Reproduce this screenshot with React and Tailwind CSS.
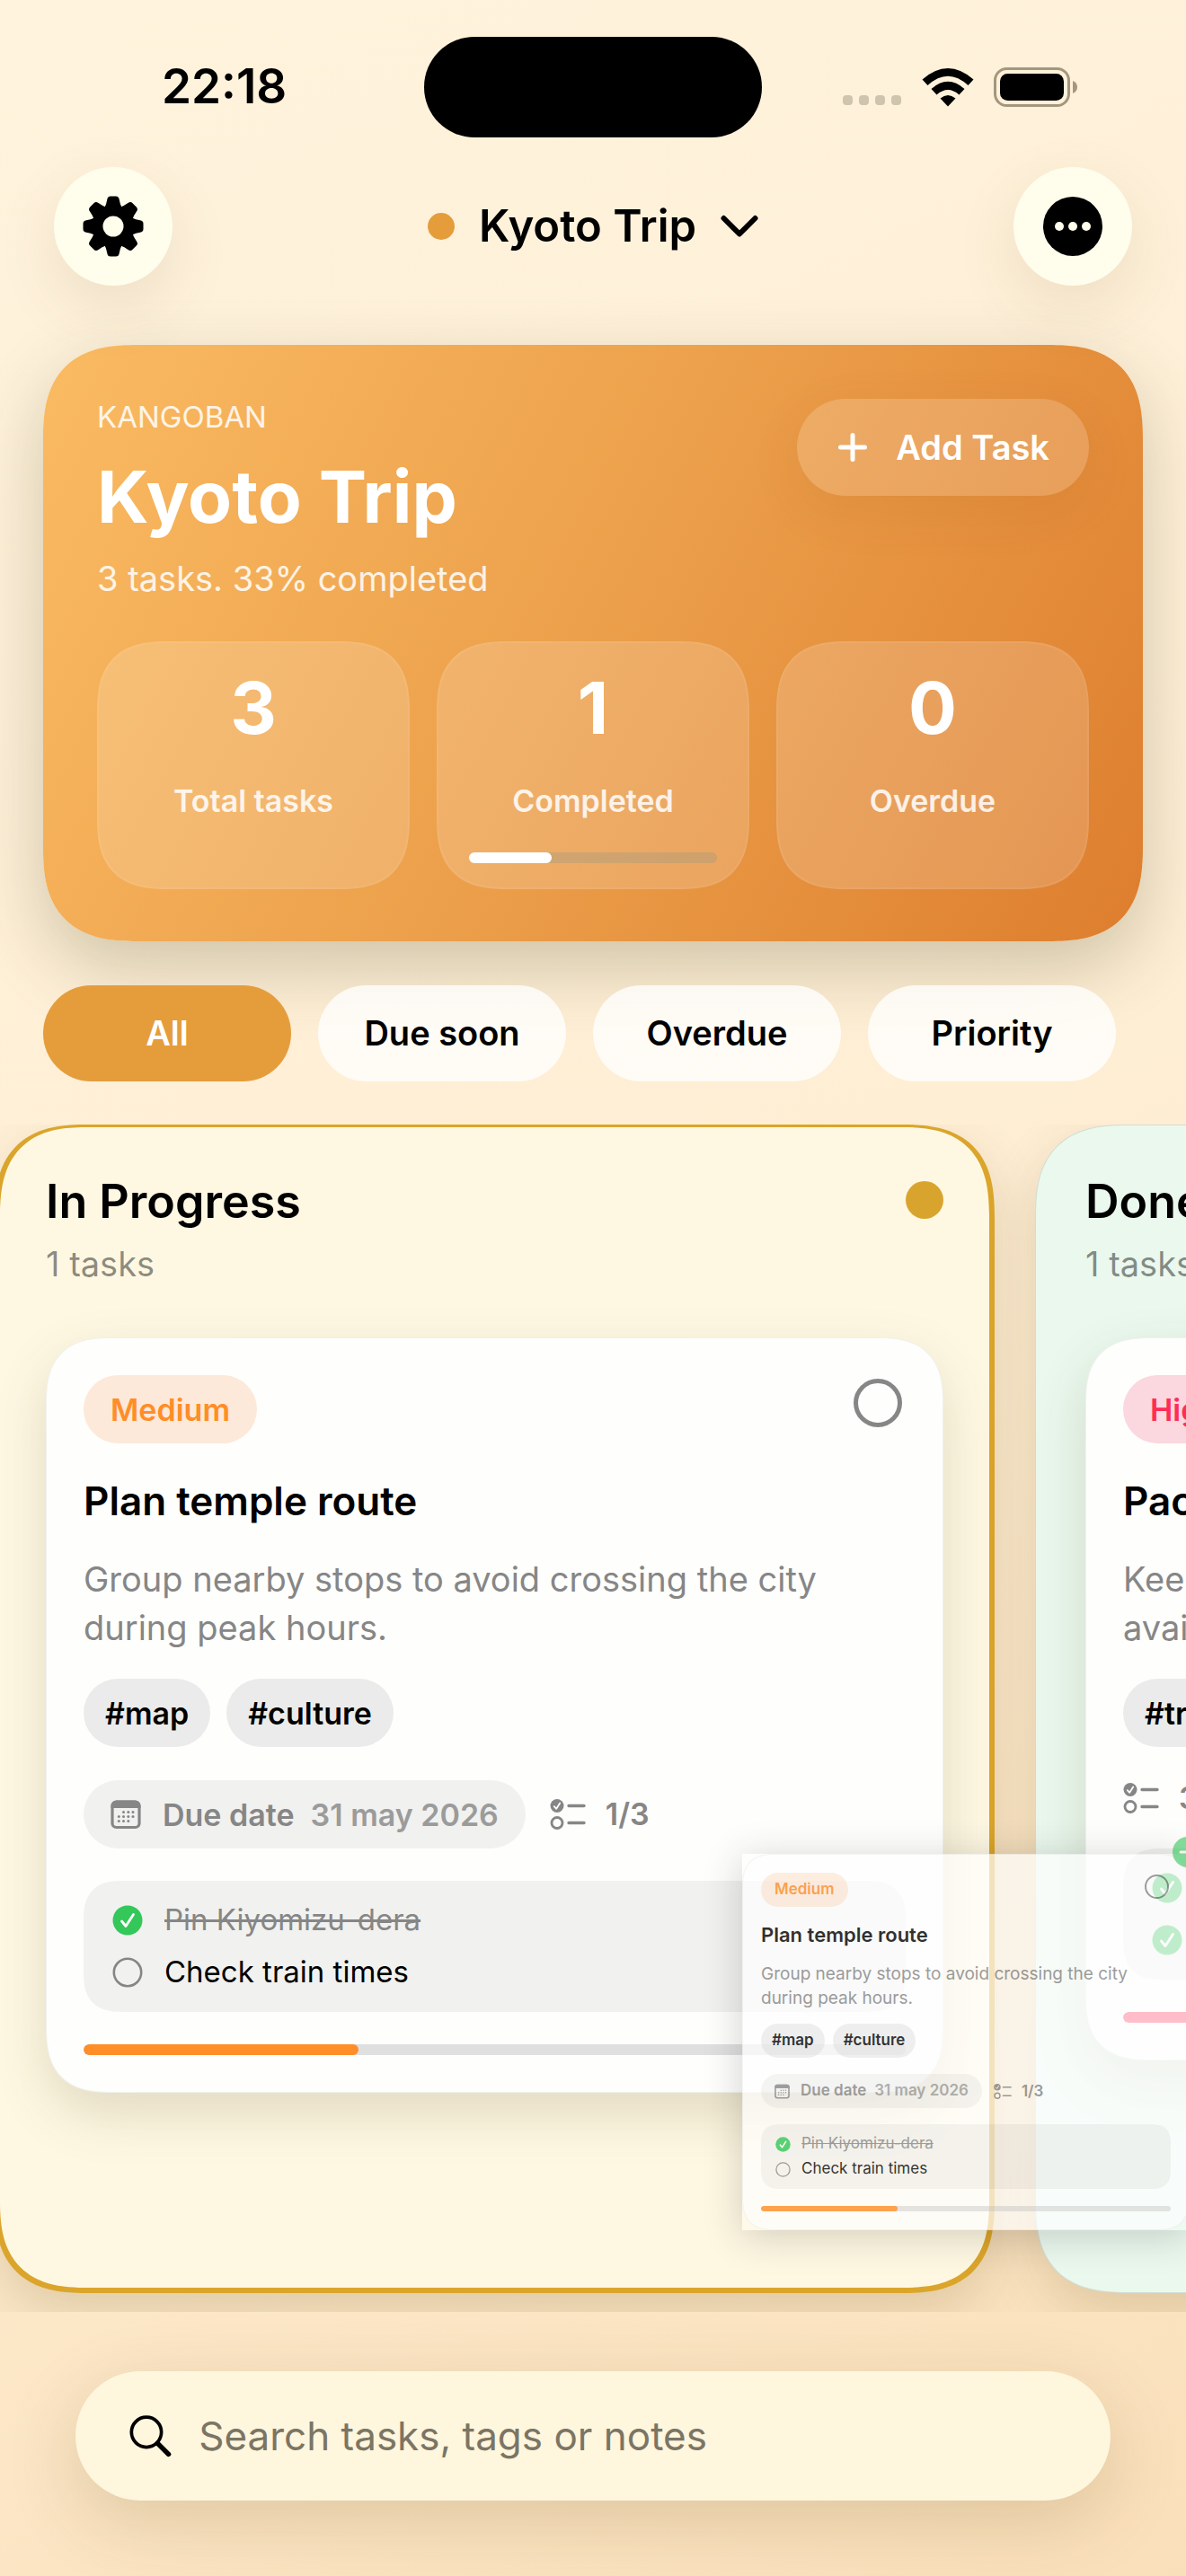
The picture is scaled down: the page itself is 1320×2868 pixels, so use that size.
import { useState } from "react";

const tasks = {
  temple: {
    id: "temple",
    priority: "Medium",
    title: "Plan temple route",
    description: "Group nearby stops to avoid crossing the city during peak hours.",
    tags: ["#map", "#culture"],
    due: "31 may 2026",
    count: "1/3",
    items: [
      { label: "Pin Kiyomizu-dera", done: true },
      { label: "Check train times", done: false },
    ],
    progress: 33.4,
  },
  pack: {
    id: "pack",
    priority: "High",
    title: "Pack essentials",
    description: "Keep passports, tickets and adapters easily\navailable in the day bag.",
    tags: ["#travel"],
    due: null,
    count: "3/3",
    items: [
      { label: "Passport", done: true },
      { label: "Rail pass", done: true },
    ],
    progress: 100,
  },
};

const filters = ["All", "Due soon", "Overdue", "Priority"];

// Sizes for a card in a column and for the small copy shown while dragging
const sizes = {
  full: {
    card: "rounded-[74px] p-[41px]",
    badge: "h-[76px] px-[30px] text-[34px]",
    ring: "size-[54px] border-5 mt-1 mr-1",
    title: "mt-[36px] text-[44px] leading-[56px]",
    desc: "mt-[32px] text-[38px] leading-[54px]",
    row: "mt-[30px] gap-[18px]",
    tag: "h-[76px] px-[24px] text-[34px]",
    meta: "mt-[37px] gap-[27px]",
    pill: "h-[76px] px-[30px] text-[34px] gap-[24px]",
    icon: "size-[34px]",
    count: "text-[34px] leading-[40px] gap-[22px]",
    listIcon: "w-[40px] h-[34px]",
    box: "mt-[36px] gap-[10px] rounded-[44px] px-[32px] py-[20px]",
    item: "h-[48px] text-[33px] gap-[24px]",
    check: "size-[34px]",
    bar: "mt-[36px] h-[12px]",
    dateGap: "ml-[18px]",
  },
  mini: {
    card: "rounded-[37px] p-[20px]",
    badge: "h-[38px] px-[15px] text-[17px]",
    ring: "size-[27px] border-2 mt-[2px] mr-[2px]",
    title: "mt-[17px] text-[22px] leading-[28px]",
    desc: "mt-[16px] text-[19px] leading-[27px]",
    row: "mt-[15px] gap-[9px]",
    tag: "h-[38px] px-[12px] text-[17px]",
    meta: "mt-[18px] gap-[13px]",
    pill: "h-[38px] px-[15px] text-[17px] gap-[12px]",
    icon: "size-[17px]",
    count: "text-[17px] leading-[20px] gap-[11px]",
    listIcon: "w-[20px] h-[17px]",
    box: "mt-[18px] gap-[4px] rounded-[22px] px-[16px] py-[10px]",
    item: "h-[24px] text-[17px] gap-[12px]",
    check: "size-[17px]",
    bar: "mt-[19px] h-[6px]",
    dateGap: "ml-[9px]",
  },
};

const GearIcon = () => (
  <svg viewBox="0 0 68 68" className="size-[68px]" aria-hidden="true">
    <g fill="#000">
      {[0, 45, 90, 135, 180, 225, 270, 315].map((a) => (
        <path
          key={a}
          d="M24.500 13 Q26.500 9 27.300 4 Q27.800 0.500 31 0.500 H37 Q40.200 0.500 40.700 4 Q41.500 9 43.500 13 Z"
          transform={`rotate(${a} 34 34)`}
        />
      ))}
      <path fillRule="evenodd" d="M34 10.500a23.500 23.500 0 1 0 0 47a23.500 23.500 0 1 0 0-47zM34 22.500a11.500 11.500 0 1 1 0 23a11.500 11.500 0 1 1 0-23z" />
    </g>
  </svg>
);

const MoreIcon = () => (
  <svg viewBox="0 0 66 66" className="size-[66px]" aria-hidden="true">
    <circle cx="33" cy="33" r="33" fill="#000" />
    <g fill="#fffdec">
      <circle cx="18" cy="33" r="5" />
      <circle cx="33" cy="33" r="5" />
      <circle cx="48" cy="33" r="5" />
    </g>
  </svg>
);

const CalendarIcon = ({ className }) => (
  <svg viewBox="0 0 34 34" className={className} aria-hidden="true">
    <rect x="2" y="3" width="30" height="28.500" rx="4.500" fill="none" stroke="#868686" strokeWidth="3.200" />
    <path d="M0.500 7.500a6 6 0 0 1 6-6h21a6 6 0 0 1 6 6v2.500h-33z" fill="#868686" />
    <g fill="#868686">
      {[14.5, 19.8, 25].map((x) => <circle key={x} cx={x} cy="14.500" r="1.500" />)}
      {[9.3, 14.5, 19.8, 25].map((x) => <circle key={x} cx={x} cy="19.500" r="1.500" />)}
      {[9.3, 14.5, 19.8].map((x) => <circle key={x} cx={x} cy="24.500" r="1.500" />)}
    </g>
  </svg>
);

const ListIcon = ({ className }) => (
  <svg viewBox="0 0 40 34" className={className} aria-hidden="true" fill="none">
    <circle cx="8" cy="7.500" r="7.500" fill="#868686" />
    <path d="M4.800 8.200 7.200 10.800 11.200 4.500" stroke="#fff" strokeWidth="1.800" strokeLinecap="round" strokeLinejoin="round" />
    <circle cx="8" cy="26.500" r="6" stroke="#868686" strokeWidth="2.800" />
    <path d="M21 7.500H38M21 26.500H38" stroke="#868686" strokeWidth="3.400" strokeLinecap="round" />
  </svg>
);

const CheckMark = ({ done, className }) => (
  <svg viewBox="0 0 34 34" className={className} aria-hidden="true" fill="none">
    {done ? (
      <>
        <circle cx="17" cy="17" r="16.500" fill="#34c759" />
        <path d="M10.500 18 15 23.500 23.500 10.500" stroke="#fff" strokeWidth="2.800" strokeLinecap="round" strokeLinejoin="round" />
      </>
    ) : (
      <circle cx="17" cy="17" r="15.200" stroke="#868686" strokeWidth="2.600" />
    )}
  </svg>
);

const StatusBar = () => (
  <div className="grid grid-cols-3 items-start px-[60px] pt-[41px]">
    <div className="flex h-[112px] items-center pl-[120px] text-[53px] font-semibold">22:18</div>
    <div className="mx-auto h-[112px] w-[376px] rounded-full bg-black" />
    <div className="flex h-[112px] items-center justify-end gap-[22px] pr-[60px]">
      <svg viewBox="0 0 66 44" className="h-[44px] w-[66px]" fill="#cfc4ae" aria-hidden="true">
        {[0, 18, 36, 54].map((x) => <rect key={x} x={x} y="31" width="11" height="11" rx="4" />)}
      </svg>
      <svg viewBox="0 0 58 44" className="h-[44px] w-[58px]" aria-hidden="true">
        <path d="M29 43.500 20.500 34.500Q29 27.500 37.500 34.500Z" />
        <path d="M10.500 24Q29 7.500 47.500 24L41.500 30.500Q29 19.500 16.500 30.500Z" />
        <path d="M0.500 13.500Q29-11.500 57.500 13.500L51.500 20Q29-0.500 6.500 20Z" />
      </svg>
      <svg viewBox="0 0 94 44" className="h-[44px] w-[94px]" aria-hidden="true">
        <rect x="1.500" y="1.500" width="82" height="41" rx="13" fill="none" stroke="#a3977f" strokeWidth="3" />
        <rect x="7" y="7" width="71" height="30" rx="8.500" />
        <path d="M88 15Q93 17 93 22Q93 27 88 29Z" fill="#a3977f" />
      </svg>
    </div>
  </div>
);

const Header = () => (
  <header className="flex items-center justify-between px-[60px] pt-[33px]">
    <button aria-label="Settings" className="flex size-[132px] items-center justify-center rounded-full bg-[#fffdec] shadow-[0_24px_70px_rgba(80,60,0,0.1)]">
      <GearIcon />
    </button>
    <button className="flex items-center gap-[27px] text-[49px] leading-[60px] font-semibold">
      <span className="size-[30px] rounded-full bg-[#e59d3c]" />
      Kyoto Trip
      <svg viewBox="0 0 42 26" className="h-[26px] w-[42px]" fill="none" stroke="#000" strokeWidth="6" strokeLinecap="round" strokeLinejoin="round" aria-hidden="true">
        <path d="M3.500 4 21 21.500 38.500 4" />
      </svg>
    </button>
    <button aria-label="More" className="flex size-[132px] items-center justify-center rounded-full bg-[#fffdec] shadow-[0_24px_70px_rgba(80,60,0,0.1)]">
      <MoreIcon />
    </button>
  </header>
);

const Stat = ({ value, label, progress }) => (
  <div className="flex h-[276px] flex-col items-center rounded-[80px] border-2 border-white/6 bg-white/17 px-[34px] pt-[24px] text-white [corner-shape:superellipse(1.4)]">
    <p className="text-[80px] leading-[96px] font-bold">{value}</p>
    <p className="mt-[36px] text-[34px] leading-[40px] font-semibold text-white/85">{label}</p>
    {progress !== undefined && (
      <div className="mt-[37px] h-[12px] w-full rounded-full bg-[#8c968c]/30">
        <div className="h-full rounded-full bg-white" style={{ width: `${progress}%` }} />
      </div>
    )}
  </div>
);

const Hero = () => (
  <section className="mx-[48px] mt-[66px] rounded-[106px] bg-linear-[118deg] from-[#fabb62] via-[#ec9f4a] to-[#dd7e2e] p-[60px] pb-[58px] text-white shadow-[0_30px_80px_rgba(60,60,20,0.24)] [corner-shape:superellipse(1.4)]">
    <div className="flex items-start justify-between">
      <div>
        <p className="text-[33px] leading-[40px] text-white/85">KANGOBAN</p>
        <h1 className="mt-[18px] text-[80px] leading-[102px] font-bold">Kyoto Trip</h1>
        <p className="mt-[16px] text-[38px] leading-[48px] text-white/85">3 tasks. 33% completed</p>
      </div>
      <button className="flex h-[108px] items-center gap-[30px] rounded-full bg-white/17 px-[44px] text-[38px] font-semibold shadow-[0_18px_60px_rgba(120,70,0,0.08)]">
        <svg viewBox="0 0 36 36" className="size-[36px]" stroke="#fff" strokeWidth="5" strokeLinecap="round" aria-hidden="true">
          <path d="M18 4.500V31.500M4.500 18H31.500" />
        </svg>
        Add Task
      </button>
    </div>
    <div className="mt-[46px] grid grid-cols-3 gap-[30px]">
      <Stat value="3" label="Total tasks" />
      <Stat value="1" label="Completed" progress={33.4} />
      <Stat value="0" label="Overdue" />
    </div>
  </section>
);

const TaskCard = ({ task, size, className }) => {
  const s = sizes[size];
  const high = task.priority === "High";
  return (
    <article className={`border border-black/5 [corner-shape:superellipse(1.4)] ${s.card} ${className}`}>
      <div className="flex items-start justify-between">
        <span className={`flex items-center rounded-full font-semibold ${s.badge} ${high ? "bg-[#fbd7df] text-[#ff2d55]" : "bg-[#fde9d9] text-[#ff8d28]"}`}>
          {task.priority}
        </span>
        <button aria-label={`Complete ${task.title}`} className={`rounded-full border-[#868686] ${s.ring}`} />
      </div>
      <h3 className={`font-semibold text-black ${s.title}`}>{task.title}</h3>
      <p className={`whitespace-pre-line text-[#868686] ${s.desc}`}>{task.description}</p>
      <div className={`flex ${s.row}`}>
        {task.tags.map((tag) => (
          <span key={tag} className={`flex items-center rounded-full bg-[#ebebeb] font-semibold text-black ${s.tag}`}>{tag}</span>
        ))}
      </div>
      <div className={`flex items-center text-[#868686] ${s.meta}`}>
        {task.due && (
          <div className={`flex items-center rounded-full bg-black/5 font-semibold ${s.pill}`}>
            <CalendarIcon className={s.icon} />
            <p>
              Due date
              <span className={`font-semibold text-[#9b9b9b] ${s.dateGap}`}>{task.due}</span>
            </p>
          </div>
        )}
        <div className={`flex items-center font-semibold ${s.count}`}>
          <ListIcon className={s.listIcon} />
          {task.count}
        </div>
      </div>
      <ul className={`flex flex-col bg-black/5 [corner-shape:superellipse(1.4)] ${s.box}`}>
        {task.items.map((item) => (
          <li key={item.label} className={`flex items-center ${s.item} ${item.done ? "text-[#868686] line-through" : "text-black"}`}>
            <CheckMark done={item.done} className={s.check} />
            {item.label}
          </li>
        ))}
      </ul>
      <div className={`overflow-hidden rounded-full bg-[#dfdfdf] ${s.bar}`}>
        <div
          className={`h-full rounded-full ${high ? "bg-[#ff2d55]" : "bg-[#ff8d28]"}`}
          style={{ width: `${task.progress}%` }}
        />
      </div>
    </article>
  );
};

const Column = ({ title, task, dot, className }) => (
  <section className={`shrink-0 shadow-[0_24px_60px_rgba(80,60,0,0.16)] [corner-shape:superellipse(1.4)] ${className}`}>
    <div className="flex items-start justify-between">
      <div>
        <h2 className="text-[52px] leading-[64px] font-semibold">{title}</h2>
        <p className="mt-[13px] text-[38px] leading-[48px] text-black/45">1 tasks</p>
      </div>
      <span className={`mt-[9px] size-[42px] rounded-full ${dot}`} />
    </div>
    <TaskCard task={task} size="full" className="mt-[58px] bg-[#fefefc] shadow-[0_24px_60px_rgba(80,70,20,0.16)]" />
  </section>
);

export default function App() {
  const [filter, setFilter] = useState("All");

  return (
    <div className="min-h-screen overflow-hidden bg-linear-[155deg] from-[#fff3dd] via-[#feeed4] to-[#fae0ba] font-[Inter,'Liberation_Sans',sans-serif] text-black">
      <StatusBar />
      <Header />
      <main>
        <Hero />

        <div className="mt-[49px] grid grid-cols-4 gap-[30px] pr-[78px] pl-[48px]">
          {filters.map((name) => (
            <button
              key={name}
              onClick={() => setFilter(name)}
              className={`h-[107px] rounded-full text-[38px] font-semibold ${name === filter ? "bg-[#e59d3c] text-white" : "bg-white/78 text-black"}`}
            >
              {name}
            </button>
          ))}
        </div>

        {/* Board */}
        <div className="relative mt-[48px] flex h-[1322px] gap-[45px] overflow-hidden pb-[21px]">
          <Column
            title="In Progress"
            task={tasks.temple}
            dot="bg-[#d9a42e]"
            className="-ml-[6px] w-[1113px] rounded-[104px] border-6 border-t-3 border-[#dba52b] bg-[#fef8e3] px-[51px] pt-[51px]"
          />
          <Column
            title="Done"
            task={tasks.pack}
            dot="bg-[#34c759]"
            className="w-[1113px] rounded-[104px] border border-black/10 bg-[#eaf8ee] px-[55px] pt-[53px]"
          />

          {/* Card being dragged */}
          <div className="absolute top-[812px] left-[826px] w-[498px] bg-white/30 opacity-80 shadow-[0_6px_40px_rgba(0,0,0,0.22)]">
            <TaskCard task={tasks.temple} size="mini" className="bg-white/80" />
          </div>
          <span className="absolute top-[793px] left-[1305px] flex size-[34px] items-center justify-center rounded-full bg-[#34c759] opacity-60">
            <svg viewBox="0 0 20 20" className="size-[20px]" stroke="#fff" strokeWidth="3" strokeLinecap="round" aria-hidden="true">
              <path d="M10 2V18M2 10H18" />
            </svg>
          </span>
        </div>
      </main>

      <footer className="px-[84px] pt-[66px] pb-[84px]">
        <label className="flex h-[144px] items-center gap-[30px] rounded-full bg-[#fff6de] px-[60px] shadow-[0_24px_80px_rgba(90,60,0,0.17)]">
          <svg viewBox="0 0 51 51" className="size-[51px]" fill="none" stroke="#000" strokeLinecap="round" aria-hidden="true">
            <circle cx="20.500" cy="20.500" r="18" strokeWidth="4" />
            <path d="M34 34 47 47" strokeWidth="6" />
          </svg>
          <input
            type="text"
            aria-label="Search tasks, tags or notes"
            placeholder="Search tasks, tags or notes"
            className="w-full bg-transparent text-[44px] leading-[60px] outline-none placeholder:text-[#7b7564]"
          />
        </label>
      </footer>
    </div>
  );
}
